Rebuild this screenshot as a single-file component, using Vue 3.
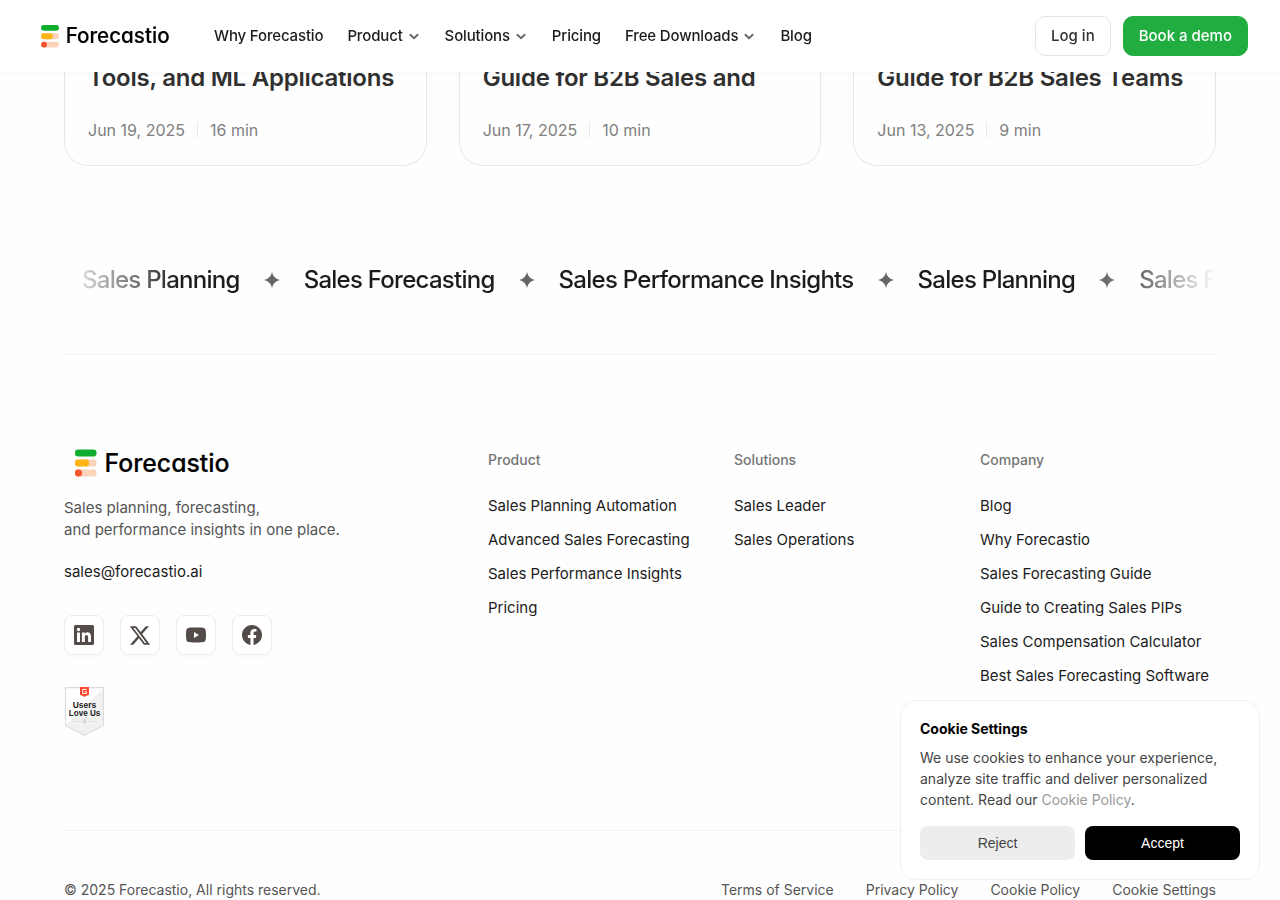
<template>
  <div class="page">
    <header class="navbar">
      <svg class="nav-logo" viewBox="0 0 156 28" role="img" aria-label="Forecastio">
        <rect x="0" y="0" width="21.5" height="7" rx="3" fill="#0fae2f" />
        <rect x="0" y="10" width="21.5" height="7" rx="3" fill="#fbd3bb" />
        <rect x="0" y="10" width="14" height="7" rx="3" fill="#fdb515" />
        <rect x="0" y="20" width="21.5" height="7" rx="3" fill="#fbd3bb" />
        <rect x="0" y="20" width="7" height="7" rx="3.2" fill="#f2542d" />
        <text x="29.5" y="22.2" textLength="125" lengthAdjust="spacingAndGlyphs">Forecastio</text>
      </svg>
      <nav class="nav-links">
        <a v-for="item in navItems" :key="item.label" class="nav-link">
          {{ item.label }}
          <svg v-if="item.menu" class="chevron" viewBox="0 0 12 12">
            <path d="M1.8 4.2 L6 8.2 L10.2 4.2" />
          </svg>
        </a>
      </nav>
      <div class="nav-actions">
        <button class="btn btn-outline">Log in</button>
        <button class="btn btn-green">Book a demo</button>
      </div>
    </header>

    <main class="container">
      <section class="cards">
        <article v-for="post in posts" :key="post.date" class="card">
          <h3>{{ post.title }}</h3>
          <div class="meta">
            <span>{{ post.date }}</span>
            <i class="divider"></i>
            <span>{{ post.time }}</span>
          </div>
        </article>
      </section>

      <section class="marquee">
        <div v-for="(text, i) in marquee" :key="i" class="marquee-item">
          <span>{{ text }}</span>
          <svg class="star" viewBox="0 0 16 16">
            <path d="M8 0 Q9.3 6.7 16 8 Q9.3 9.3 8 16 Q6.7 9.3 0 8 Q6.7 6.7 8 0Z" />
          </svg>
        </div>
      </section>
    </main>

    <footer class="container footer">
      <div class="footer-top">
        <div class="brand">
          <svg class="footer-logo" viewBox="0 0 156 28" role="img" aria-label="Forecastio">
            <rect x="0" y=".5" width="21.5" height="7" rx="3" fill="#0fae2f" />
            <rect x="0" y="10.5" width="21.5" height="7" rx="3" fill="#fbd3bb" />
            <rect x="0" y="10.5" width="14" height="7" rx="3" fill="#fdb515" />
            <rect x="0" y="20.5" width="21.5" height="7" rx="3" fill="#fbd3bb" />
            <rect x="0" y="20.5" width="7" height="7" rx="3.2" fill="#f2542d" />
            <text x="29.5" y="22.6" textLength="125" lengthAdjust="spacingAndGlyphs">Forecastio</text>
          </svg>
          <p class="tagline">Sales planning, forecasting,<br />and performance insights in one place.</p>
          <a class="email">sales@forecastio.ai</a>
          <div class="socials">
            <a v-for="s in socials" :key="s.name" class="social" :aria-label="s.name">
              <svg :viewBox="s.box"><path :d="s.path" fill-rule="evenodd" /></svg>
            </a>
          </div>
          <svg class="badge" viewBox="0 0 41 50">
            <path d="M1.5 .7 H39.5 V38.5 L20.5 48.3 L1.5 38.5Z" fill="#fff" />
            <path d="M39.5 1 V38.5 L20.5 48.3 L1.5 38.5Z" fill="#f1f1f1" />
            <path d="M1.5 .7 H39.5 V38.5 L20.5 48.3 L1.5 38.5Z" fill="none" stroke="#dcdcdc" stroke-width="1.2" />
            <path d="M16 0 H25 V7.8 L20.5 9.8 L16 7.8Z" fill="#ff492c" />
            <path d="M22.7 2.4 H18.7 V6.5 H22.4 V4.8 H20.9" fill="none" stroke="#fff" stroke-width="1" />
            <text x="20.5" y="21" textLength="23.5" lengthAdjust="spacingAndGlyphs">Users</text>
            <text x="20.5" y="29" textLength="31.5" lengthAdjust="spacingAndGlyphs">Love Us</text>
            <path d="M7.5 34.5 H16.5 M24.5 34.5 H33.5" stroke="#dedede" stroke-width=".8" />
            <path d="M20.5 32 l.7 1.7 1.8.1 -1.4 1.2 .5 1.8 -1.6-1 -1.6 1 .5-1.8 -1.4-1.2 1.8-.1Z" fill="#d4d4d4" />
          </svg>
        </div>
        <div v-for="col in columns" :key="col.title" class="column">
          <h4>{{ col.title }}</h4>
          <a v-for="link in col.links" :key="link">{{ link }}</a>
        </div>
      </div>
      <div class="footer-bottom">
        <span>© 2025 Forecastio, All rights reserved.</span>
        <div class="legal">
          <a v-for="link in legal" :key="link">{{ link }}</a>
        </div>
      </div>
    </footer>

    <aside class="cookie">
      <h5>Cookie Settings</h5>
      <p>
        We use cookies to enhance your experience,<br />
        analyze site traffic and deliver personalized<br />
        content. Read our <a>Cookie Policy</a>.
      </p>
      <div class="cookie-actions">
        <button class="reject">Reject</button>
        <button class="accept">Accept</button>
      </div>
    </aside>
  </div>
</template>

<script setup>
const navItems = [
  { label: 'Why Forecastio' },
  { label: 'Product', menu: true },
  { label: 'Solutions', menu: true },
  { label: 'Pricing' },
  { label: 'Free Downloads', menu: true },
  { label: 'Blog' },
];

const posts = [
  { title: 'Tools, and ML Applications', date: 'Jun 19, 2025', time: '16 min' },
  { title: 'Guide for B2B Sales and', date: 'Jun 17, 2025', time: '10 min' },
  { title: 'Guide for B2B Sales Teams', date: 'Jun 13, 2025', time: '9 min' },
];

const marquee = [
  'Sales Planning',
  'Sales Forecasting',
  'Sales Performance Insights',
  'Sales Planning',
  'Sales Forecasting',
];

const columns = [
  {
    title: 'Product',
    links: [
      'Sales Planning Automation',
      'Advanced Sales Forecasting',
      'Sales Performance Insights',
      'Pricing',
    ],
  },
  { title: 'Solutions', links: ['Sales Leader', 'Sales Operations'] },
  {
    title: 'Company',
    links: [
      'Blog',
      'Why Forecastio',
      'Sales Forecasting Guide',
      'Guide to Creating Sales PIPs',
      'Sales Compensation Calculator',
      'Best Sales Forecasting Software',
    ],
  },
];

const legal = ['Terms of Service', 'Privacy Policy', 'Cookie Policy', 'Cookie Settings'];

const socials = [
  {
    name: 'LinkedIn',
    box: '2 2 20 20',
    path: 'M3.5 2 H20.5 Q22 2 22 3.5 V20.5 Q22 22 20.5 22 H3.5 Q2 22 2 20.5 V3.5 Q2 2 3.5 2Z M5 9.5 V19 H8 V9.5Z M6.5 4.7 a1.75 1.75 0 1 0 0 3.5 a1.75 1.75 0 1 0 0-3.5Z M9.9 9.5 V19 H12.8 V14.3 C12.8 11.4 16.1 11.3 16.1 14.3 V19 H19 V13.2 C19 8.7 14.4 8.5 12.8 10.8 V9.5Z',
  },
  {
    name: 'X',
    box: '1.6 1 21 21',
    path: 'M18.244 2.25h3.308l-7.227 8.26 8.502 11.24H16.17l-5.214-6.817L4.99 21.75H1.68l7.73-8.835L1.254 2.25H8.08l4.713 6.231zm-1.161 17.52h1.833L7.084 4.126H5.117z',
  },
  {
    name: 'YouTube',
    box: '2 2 20 20',
    path: 'M12 4.5 C16 4.5 18.6 4.6 19.6 4.9 C21.3 5.3 22 6.6 22 12 C22 17.4 21.3 18.7 19.6 19.1 C18.6 19.4 16 19.5 12 19.5 C8 19.5 5.4 19.4 4.4 19.1 C2.7 18.7 2 17.4 2 12 C2 6.6 2.7 5.3 4.4 4.9 C5.4 4.6 8 4.5 12 4.5Z M10 9 V15 L15 12Z',
  },
  {
    name: 'Facebook',
    box: '2 2 20 20',
    path: 'M12 2C6.477 2 2 6.477 2 12c0 4.991 3.657 9.128 8.438 9.879V14.89h-2.54V12h2.54V9.797c0-2.506 1.492-3.89 3.777-3.89 1.094 0 2.238.195 2.238.195v2.46h-1.26c-1.243 0-1.63.771-1.63 1.562V12h2.773l-.443 2.89h-2.33v6.989C18.343 21.129 22 16.99 22 12c0-5.523-4.477-10-10-10z',
  },
];
</script>

<style>
body {
  margin: 0;
  overflow: hidden;
}
</style>

<style scoped>
.page {
  height: 900px;
  overflow: hidden;
  background: #fefefe;
  font-family: Inter, 'Liberation Sans', sans-serif;
  color: #1c1c1c;
}

.container {
  width: 1152px;
  margin: 0 auto;
}

/* header */
.navbar {
  position: fixed;
  inset: 0 0 auto;
  z-index: 10;
  box-sizing: border-box;
  height: 72px;
  padding: 0 32px 0 40.5px;
  display: flex;
  align-items: center;
  background: #fff;
  box-shadow: 0 2px 6px rgba(0, 0, 0, 0.02);
}

.nav-logo,
.footer-logo {
  display: block;
  overflow: visible;
  font-size: 25px;
  font-weight: 500;
  font-feature-settings: 'cv11';
}

.nav-logo text,
.footer-logo text {
  fill: #000;
  stroke: #000;
  stroke-width: 0.2;
}

.nav-logo {
  width: 130px;
  height: 23.3px;
  margin-top: 1.4px;
}

.nav-links {
  display: flex;
  gap: 24px;
  margin-left: 43.5px;
}

.nav-link {
  display: flex;
  align-items: center;
  gap: 5px;
  padding-bottom: 2px;
  font-size: 15px;
  font-weight: 500;
  letter-spacing: -0.15px;
  white-space: nowrap;
}

.chevron {
  width: 12px;
  height: 12px;
  margin: 2px 1px 0 0;
  fill: none;
  stroke: #666;
  stroke-width: 1.9;
}

.nav-actions {
  display: flex;
  gap: 12px;
  margin-left: auto;
}

.btn {
  box-sizing: border-box;
  height: 40px;
  padding: 0 15px 2px;
  border: 1px solid #e6e6e6;
  border-radius: 10px;
  background: #fff;
  font: 500 15px Inter, sans-serif;
  color: #333;
}

.btn-green {
  border-color: #22ad41;
  background: #22ad41;
  color: #fff;
}

/* posts */
.cards {
  display: grid;
  grid-template-columns: repeat(3, 1fr);
  gap: 32px;
}

.card {
  box-sizing: border-box;
  height: 166px;
  padding: 61px 23px 0;
  border: 1px solid #e8e8e8;
  border-top: 0;
  border-radius: 0 0 24px 24px;
}

.card h3 {
  margin: 0 0 25px;
  font-size: 24px;
  font-weight: 600;
  line-height: 34px;
  letter-spacing: -0.24px;
  white-space: nowrap;
  color: #303030;
}

.meta {
  display: flex;
  align-items: center;
  gap: 12px;
  font-size: 16px;
  line-height: 20px;
  color: #808080;
}

.divider {
  width: 1px;
  height: 16px;
  background: #e9e9e9;
}

/* marquee */
.marquee {
  box-sizing: border-box;
  height: 189px;
  padding: 94px 0 0 18px;
  display: flex;
  align-items: flex-start;
  overflow: hidden;
  border-bottom: 1px solid #f3f3f3;
  mask-image: linear-gradient(to right, transparent, #000 10%, #000 90%, transparent),
    linear-gradient(#000, #000);
  mask-size: 100% 188px, 100% 1px;
  mask-position: 0 0, 0 188px;
  mask-repeat: no-repeat;
  mask-clip: border-box;
  mask-origin: border-box;
}

.marquee-item {
  flex: none;
  display: flex;
  align-items: center;
  font-size: 24px;
  font-weight: 500;
  line-height: 40px;
  letter-spacing: -0.735px;
  white-space: nowrap;
}

.star {
  width: 16px;
  height: 16px;
  margin: 0 24px;
  fill: #666;
}

/* footer */
.footer-top {
  box-sizing: border-box;
  height: 476px;
  padding-top: 94px;
  display: grid;
  grid-template-columns: 424px 246px 246px 236px;
  border-bottom: 1px solid #f3f3f3;
}

.footer-logo {
  width: 156px;
  height: 28px;
  margin-left: 10.5px;
}

.tagline {
  margin: 20px 0 20px;
  font-size: 15px;
  line-height: 22px;
  color: #555;
}

.email {
  display: block;
  font-size: 15px;
  line-height: 22px;
}

.socials {
  display: flex;
  gap: 16px;
  margin: 32px 0;
}

.social {
  box-sizing: border-box;
  width: 40px;
  height: 40px;
  display: grid;
  place-items: center;
  border: 1px solid #ececec;
  border-radius: 8px;
  background: #fff;
  box-shadow: 0 4px 8px rgba(0, 0, 0, 0.02);
}

.social svg {
  width: 20px;
  height: 20px;
  fill: #524b48;
}

.badge {
  display: block;
  width: 41px;
  height: 50px;
}

.badge text {
  font: 700 8.6px 'Liberation Sans', Arial, sans-serif;
  text-anchor: middle;
  fill: #222;
}

.column h4 {
  margin: 1px 0 25px;
  font-size: 14px;
  font-weight: 500;
  line-height: 20px;
  color: #757575;
}

.column a {
  display: block;
  margin-bottom: 12px;
  font-size: 15px;
  line-height: 22px;
  white-space: nowrap;
}

.footer-bottom {
  display: flex;
  justify-content: space-between;
  padding-top: 49px;
  font-size: 14px;
  line-height: 20px;
  color: #555;
}

.legal {
  display: flex;
  gap: 32px;
}

/* cookie popup */
.cookie {
  position: fixed;
  right: 20px;
  bottom: 20px;
  z-index: 20;
  box-sizing: border-box;
  width: 360px;
  height: 180px;
  padding: 18px 19px;
  border: 1px solid #f0f0f0;
  border-radius: 16px;
  background: #fff;
}

.cookie h5 {
  margin: 0 0 8px;
  font-size: 14px;
  font-weight: 700;
  line-height: 20px;
  color: #000;
}

.cookie p {
  margin: 0 0 16px;
  font-size: 14px;
  line-height: 21px;
  white-space: nowrap;
  color: #444;
}

.cookie p a {
  color: #999;
}

.cookie-actions {
  display: grid;
  grid-template-columns: 1fr 1fr;
  gap: 10px;
}

.cookie-actions button {
  height: 34px;
  padding: 0;
  border: 0;
  border-radius: 8px;
  font: 14px 'Liberation Sans', Arial, sans-serif;
}

.reject {
  background: #ededed;
  color: #444;
}

.accept {
  background: #000;
  color: #fff;
}
</style>
